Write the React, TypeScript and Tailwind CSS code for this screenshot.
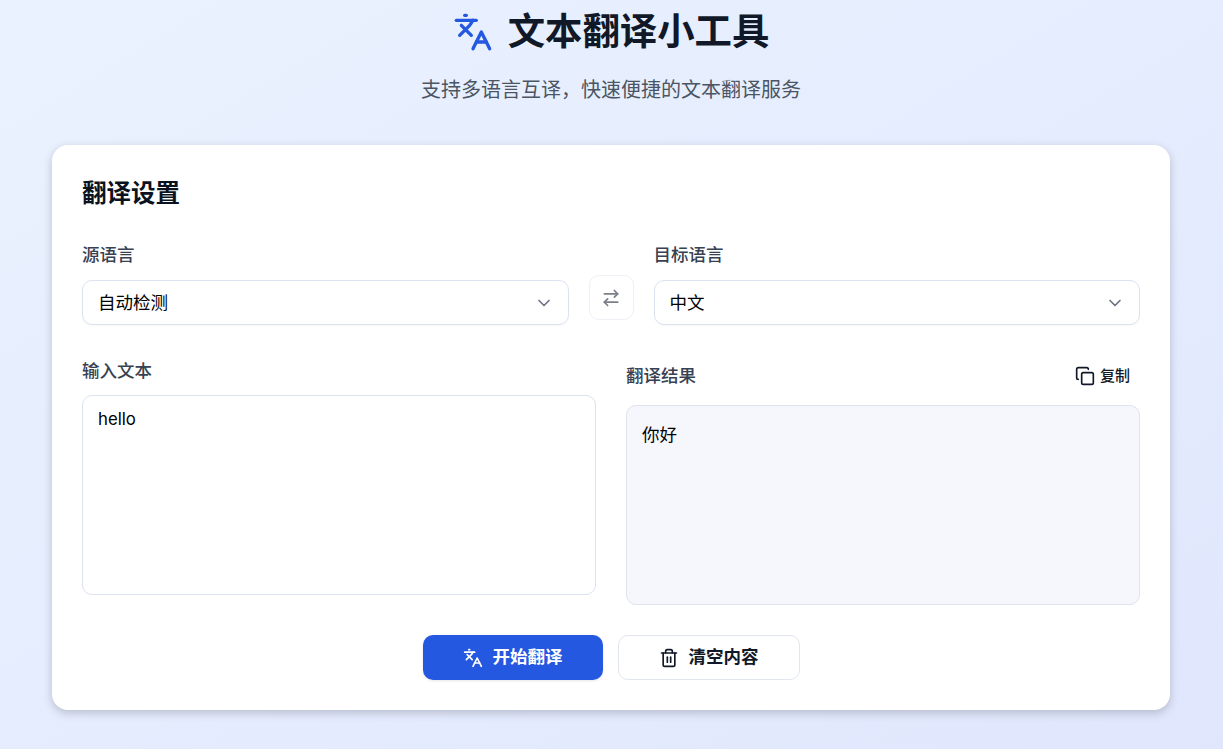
import { Languages, ArrowRightLeft, ChevronDown, Copy, Trash2 } from "lucide-react";

function Select({ value }: { value: string }) {
  return (
    <div className="h-[45px] flex items-center justify-between rounded-[10px] border border-[#dbe2f0] bg-white pl-[15px] pr-[14px] shadow-[0_1px_2px_rgba(0,0,0,0.03)] text-[17.5px] text-black">
      <span className="pt-[2px]">{value}</span>
      <ChevronDown className="w-[20px] h-[20px] text-[#6b7280]" strokeWidth={2} />
    </div>
  );
}

export default function App() {
  return (
    <div
      className="h-[749px] overflow-hidden bg-gradient-to-br from-[#eaf2ff] to-[#e0e7fd] pl-[52px] pr-[53px] pt-[4px]"
      style={{ fontFamily: 'Inter, "Noto Sans CJK SC", sans-serif' }}
    >
      <div className="flex items-center justify-center gap-[15px] h-[56px]">
        <Languages className="w-[40px] h-[40px] text-[#2458e0]" strokeWidth={2} />
        <h1 className="text-[37.4px] font-bold leading-none text-[#111827]">文本翻译小工具</h1>
      </div>
      <p className="mt-[15px] pt-[1px] text-center text-[20px] leading-[28px] text-[#4b5563]">支持多语言互译，快速便捷的文本翻译服务</p>
      <div className="mt-[41px] h-[565px] rounded-[16px] bg-white p-[30px] shadow-[0_3px_10px_rgba(0,0,0,0.2)]">
        <h2 className="text-[24.5px] font-bold leading-[36px] text-[#0b1220]">翻译设置</h2>
        <div className="mt-[31px] flex items-end gap-[20px]">
          <div className="flex-1">
            <label className="block mb-[13px] h-[25px] leading-[25px] text-[17.5px] font-medium text-[#374151]">源语言</label>
            <Select value="自动检测" />
          </div>
          <button className="mb-[5px] w-[45px] h-[45px] flex items-center justify-center rounded-[10px] border border-[#eef0f5] bg-white">
            <ArrowRightLeft className="w-[20px] h-[20px] text-[#7b7f88]" strokeWidth={2} />
          </button>
          <div className="flex-1">
            <label className="block mb-[13px] h-[25px] leading-[25px] text-[17.5px] font-medium text-[#374151]">目标语言</label>
            <Select value="中文" />
          </div>
        </div>
        <div className="mt-[33px] grid grid-cols-2 gap-[30px]">
          <div>
            <label className="block h-[25px] mb-[12px] leading-[25px] text-[17.5px] font-medium text-[#374151]">输入文本</label>
            <textarea
              readOnly
              defaultValue="hello"
              className="block w-full h-[200px] resize-none rounded-[10px] border border-[#dbe2f0] bg-white px-[15px] py-[9px] text-[16.8px] leading-[28px] text-black outline-none"
            />
          </div>
          <div>
            <div className="flex items-center justify-between h-[30px] mt-[3px] mb-[14px]">
              <span className="text-[17.5px] font-medium text-[#374151]">翻译结果</span>
              <button className="flex items-center gap-[5px] pr-[10px] text-[15px] font-medium text-[#111827]">
                <Copy className="w-[20px] h-[20px]" strokeWidth={2} />
                复制
              </button>
            </div>
            <div className="h-[200px] rounded-[10px] border border-[#dfe3ee] bg-[#f6f7fc] px-[15px] py-[15px] text-[17.5px] leading-[28px] text-black">你好</div>
          </div>
        </div>
        <div className="mt-[30px] flex justify-center gap-[15px]">
          <button className="w-[180px] h-[45px] flex items-center justify-center gap-[10px] rounded-[10px] bg-[#2458e0] text-white text-[17.5px] font-semibold shadow-[0_1px_3px_rgba(0,0,0,0.1)]">
            <Languages className="w-[20px] h-[20px]" strokeWidth={2} />
            开始翻译
          </button>
          <button className="w-[182px] h-[45px] flex items-center justify-center gap-[10px] rounded-[10px] border border-[#e2e6f0] bg-white text-[#111827] text-[17.5px] font-semibold">
            <Trash2 className="w-[20px] h-[20px]" strokeWidth={2} />
            清空内容
          </button>
        </div>
      </div>
    </div>
  );
}
